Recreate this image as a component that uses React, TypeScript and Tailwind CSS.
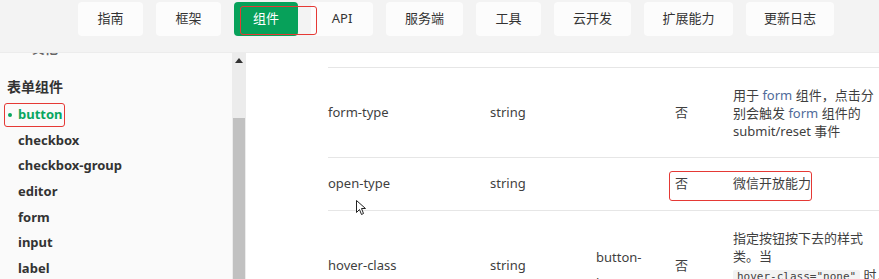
const navItems = ["指南", "框架", "组件", "API", "服务端", "工具", "云开发", "扩展能力", "更新日志"];
const navWidths = ["w-[65px]", "w-[65px]", "w-[64px]", "w-[62px]", "w-[77px]", "w-[65px]", "w-[77px]", "w-[89px]", "w-[88px]"];

const sideItems = ["checkbox", "checkbox-group", "editor", "form", "input", "label"];

function Cursor() {
  return (
    <svg width="10" height="16" viewBox="0 0 10 16" className="absolute left-[356px] top-[200px]">
      <path d="M0.5 0.5 L0.5 12.5 L3.5 9.5 L5.5 14.5 L7.5 13.5 L5.5 8.5 L9.5 8.5 Z" fill="#fff" stroke="#222" strokeWidth="1" strokeLinejoin="round" />
    </svg>
  );
}

export default function App() {
  return (
    <div
      className="relative h-[279px] w-[879px] overflow-hidden bg-white text-[#333]"
      style={{ fontFamily: '"Noto Sans", "Noto Sans CJK SC", sans-serif' }}
    >
      {/* top nav */}
      <div className="relative h-[53px] border-b border-[#ececec] bg-[#f3f3f3]">
        <div className="flex gap-[13px] pl-[78px] pt-[2px]">
          {navItems.map((t, i) => (
            <div
              key={t}
              className={
                "flex h-[34px] items-center justify-center rounded-[4px] text-[13px] " +
                navWidths[i] +
                (t === "组件" ? " bg-[#07a15a] text-white" : " bg-[#fcfcfc] text-[#333]")
              }
            >
              {t}
            </div>
          ))}
        </div>
        <div className="absolute left-[240px] top-[6px] h-[29px] w-[77px] rounded-[3px] border border-[#e53935]" />
      </div>

      <div className="flex h-[226px]">
        {/* sidebar */}
        <div className="w-[232px] overflow-hidden bg-[#fafafa]">
          <div className="-mt-[13px] pl-[32px] text-[13px] font-bold leading-[16px] text-[#666]">其他</div>
          <div className="mt-[21px] pl-[7px] text-[14px] font-bold leading-[20px] text-[#333]">表单组件</div>
          <div className="mt-[5px] flex h-[25.67px] items-center">
            <div className="ml-[4px] flex h-[24px] items-center gap-[6px] rounded-[3px] border border-[#e53935] pl-[3px] pr-[1px]">
              <span className="h-[4px] w-[4px] rounded-full bg-[#07a660]" />
              <span className="text-[13px] font-bold text-[#07a660]">button</span>
            </div>
          </div>
          {sideItems.map((s) => (
            <div key={s} className="flex h-[25.67px] items-center pl-[18px] text-[13px] font-bold text-[#333]">
              {s}
            </div>
          ))}
        </div>

        {/* scrollbar */}
        <div className="flex w-[14px] flex-col bg-[#ececec]">
          <div className="flex h-[65px] justify-center pt-[5px]">
            <svg width="8" height="5" viewBox="0 0 8 5">
              <path d="M4 0 L8 5 L0 5 Z" fill="#333" />
            </svg>
          </div>
          <div className="mx-[1px] flex-1 bg-[#c1c1c1]" />
        </div>

        {/* table */}
        <div className="relative flex-1 overflow-hidden bg-white pl-[82px] pt-[14px] text-[13px] text-[#3f3f3f]">
          <div className="border-t border-[#e6e6e6]">
            <div className="flex h-[90px] items-center border-b border-[#e6e6e6]">
              <div className="w-[162px]">form-type</div>
              <div className="w-[106px]">string</div>
              <div className="w-[79px]"></div>
              <div className="w-[58px]">否</div>
              <div className="w-[146px] whitespace-nowrap leading-[18px]">
                用于 <span className="text-[#4f6a9a]">form</span> 组件，点击分
                <br />
                别会触发 <span className="text-[#4f6a9a]">form</span> 组件的
                <br />
                submit/reset 事件
              </div>
            </div>
            <div className="relative flex h-[53px] items-center border-b border-[#e6e6e6]">
              <div className="w-[162px]">open-type</div>
              <div className="w-[106px]">string</div>
              <div className="w-[79px]"></div>
              <div className="w-[58px]">否</div>
              <div className="w-[146px]">微信开放能力</div>
              <div className="absolute left-[341px] top-[13px] h-[30px] w-[143px] rounded-[3px] border border-[#e53935]" />
            </div>
            <div className="flex h-[110px] items-center">
              <div className="w-[162px]">hover-class</div>
              <div className="w-[106px]">string</div>
              <div className="w-[79px] pt-[8px] leading-[26px]">
                button-
                <br />
                hover
              </div>
              <div className="w-[58px]">否</div>
              <div className="w-[146px] whitespace-nowrap leading-[18px]">
                指定按钮按下去的样式
                <br />
                类。当
                <div className="mt-[1px]">
                  <span
                    className="rounded-[2px] bg-[#f3f3f3] px-[4px] text-[11px] text-[#444]"
                    style={{ fontFamily: '"DejaVu Sans Mono", monospace' }}
                  >
                    hover-class="none"
                  </span>{" "}
                  时，
                </div>
                没有点击态效果
              </div>
            </div>
          </div>
        </div>
      </div>

      <Cursor />
    </div>
  );
}
